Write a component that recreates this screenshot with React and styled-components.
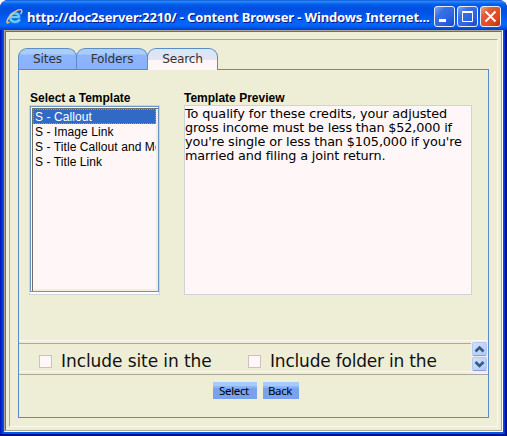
import React from "react";
import styled, { createGlobalStyle } from "styled-components";

const Global = createGlobalStyle`
  *{box-sizing:border-box}
  body{margin:0;background:#fff;overflow:hidden}
`;
const verdana = `"DejaVu Sans", Verdana, sans-serif`;
const arial = `"Liberation Sans", Arial, sans-serif`;

const Text = styled.span`
  white-space: pre;
  letter-spacing: ${(p) => p.$track || 0}px;
`;
const Win = styled.div`
  width: 507px; height: 436px;
  display: flex; flex-direction: column;
  border-radius: 8px 8px 0 0;
  background: linear-gradient(90deg,#0010b8 0,#0831d9 2px,#0455ea 4px,#0455ea 503px,#0030d0 505px,#00108c 505px);
  box-shadow: inset 0 -2px 0 #00108c;
  overflow: hidden;
`;
const TitleBar = styled.header`
  height: 30px; flex: none;
  display: flex; align-items: center;
  padding: 3px 6px 0 6px;
  background: linear-gradient(180deg,#0a3fc0 0,#2a8cff 1px,#2183fa 2px,#0660ec 4px,#0050e0 8px,#0054e6 14px,#0260fb 20px,#0468ff 25px,#0458ec 27px,#0040c8 30px);
`;
const Title = styled.h1`
  margin: 0 0 0 4px; flex: 1;
  font: 700 13px/18px "Noto Sans", sans-serif;
  color: #fff; text-shadow: 1px 1px 0 #0a1883;
`;
const Controls = styled.div`display:flex;gap:2px;flex:none;`;
const WinButton = styled.button`
  width: 21px; height: 21px; padding: 0;
  border: 1px solid #e6eefc; border-radius: 3px;
  background: ${(p) => p.$close
    ? "linear-gradient(135deg,#f0a088 0,#e25a38 30%,#dc4a22 70%,#b83010 100%)"
    : "linear-gradient(135deg,#7ba4f4 0,#3a70e6 30%,#2a60e0 70%,#1c48c0 100%)"};
  svg{display:block}
`;
const Outer = styled.div`
  margin: 0 4px 4px; flex: 1;
  display: flex;
  border: 1px solid; border-color: #aca899 #fff #fff #aca899;
`;
const Bevel = styled.div`
  flex: 1; display: flex; padding: 7px 3px 3px;
  background: #eeeed6;
  border: 1px solid; border-color: #716f64 #aca899 #aca899 #716f64;
`;
const Frame = styled.main`
  flex: 1; padding: 8px;
  border: 1px solid; border-color: #aca899 #fff6f2 #fff6f2 #aca899;
`;
const Tabs = styled.nav`display:flex;height:21px;`;
const Tab = styled.div`
  width: ${(p) => p.$w}px; height: ${(p) => (p.$active ? 22 : 21)}px;
  margin-right: -1px; position: relative;
  border: 1px solid #5a8cc8; border-bottom: 0;
  border-radius: 9px 9px 0 0;
  font: 12.2px/20px ${verdana}; color: #333;
  text-align: center;
  background: ${(p) => p.$active
    ? "linear-gradient(#d8e6f8 0 7px,#e6e4f2 7px 11px,#fff6f8 11px)"
    : "linear-gradient(#a9ccf8 0 5px,#8db5fd 6px,#8ab2fc 100%)"};
`;
const Panel = styled.section`
  height: 349px; border: 1px solid #5a8cc8;
  display: flex; flex-direction: column;
`;
const Columns = styled.div`
  height: 270px; display: flex; gap: 24px; padding: 21px 0 0 10px;
`;
const Label = styled.h2`
  margin: 0 0 0 ${(p) => p.$inset || 0}px; height: 14px;
  font: 700 12px/14px ${arial}; color: #000;
`;
const ListOuter = styled.div`
  width: 131px; height: 190px;
  border: 1px solid #ccd4dc; background: #fff; padding: 0 0 2px;
`;
const List = styled.ul`
  list-style: none; margin: 0; height: 186px; padding: 2px 2px 0 1px;
  border: 1px solid #6b93c9; background: #fff6f7;
  box-shadow: inset 1px 1px 0 #fff, inset 2px 2px 0 #716f64, inset -2px -2px 0 #f0eedc;
`;
const Option = styled.li`
  height: 15px; overflow: hidden; margin-left: 1px; padding-left: 2px;
  font: 12px/17px ${arial};
  color: ${(p) => (p.$selected ? "#fff" : "#000")};
  background: ${(p) => (p.$selected ? "#316ac5" : "transparent")};
  outline: ${(p) => (p.$selected ? "1px dotted #d89030" : "none")};
  outline-offset: -1px;
`;
const Preview = styled.div`
  width: 288px; height: 190px; border: 1px solid #ccd4d8;
  background: #fff6f7; font: 12.8px/14px ${verdana}; color: #000;
  display: flex; flex-direction: column; padding-top: 1px;
`;
const Strip = styled.div`
  height: 35px; display: flex; flex: none;
  border-top: 1px solid #fff6f2; border-bottom: 1px solid #aca899;
`;
const Checks = styled.div`
  flex: 1; display: flex; align-items: center; padding: 7px 0 0 20px;
  margin: 2px 0; border-top: 1px solid #aca899; border-bottom: 1px solid #fff6f2;
  font: 17px/20px ${verdana}; color: #111;
`;
const Check = styled.label`
  display:flex;align-items:center;gap:9px; width:209px;
`;
const Box = styled.span`width:13px;height:13px;border:1px solid #cfc0bc;background:#fff6f7;`;
const Scroll = styled.div`width:17px;display:flex;flex-direction:column;background:#f4eef0;padding-top:1px;`;
const ScrollButton = styled.button`
  height: 14px; width: 15px; margin: 0 1px 1px; padding: 0;
  border: 1px solid #b4c8f0; border-bottom-color: #8c9cd0; border-radius: 2px;
  background: linear-gradient(135deg,#d0e2ff,#a8ccf8);
  svg{display:block}
`;
const Actions = styled.div`display:flex;gap:6px;justify-content:center;padding:7px 0 0 5px;`;
const Action = styled.button`
  width: ${(p) => p.$w}px; height: 17px; padding: 0 2px 0 0; border: 0;
  background: linear-gradient(#a6ccfc 0 4px,#8fb4f6 4px 6px,#78a2ee 6px);
  font: 11.5px/17px "Noto Sans", Tahoma, sans-serif; color: #000;
`;

const IconSlot = styled.span`flex:none;display:block;width:17px;height:17px;svg{display:block}`;

function BrowserIcon() {
  return (
    <svg width="17" height="17" viewBox="0 0 17 17" fill="none">
      <path d="M13.8 11.4C12.3 15.2 4.4 15.8 4.2 9.6C4 4 13.2 3.4 13.1 9.2H5" stroke="#1c7fe0" strokeWidth="3.6" />
      <path d="M13.5 11.2C12 14.6 4.5 15.2 4.3 9.6C4.1 4.4 13 3.8 12.9 9H5" stroke="#6fcbfa" strokeWidth="2.2" />
      <path d="M3.4 14C-.6 17.2.4 11.5 5 6.8C9.4 2.2 15.4.2 15.9 2.8C16 3.9 15.4 5 14.6 6.2" stroke="#f0c878" strokeWidth="1.4" />
    </svg>
  );
}

const previewLines = [
  { text: "To qualify for these credits, your adjusted", track: -0.08 },
  { text: "gross income must be less than $52,000 if", track: -0.14 },
  { text: "you're single or less than $105,000 if you're", track: -0.12 },
  { text: "married and filing a joint return.", track: -0.14 },
];

export default function App() {
  return (
    <>
      <Global />
      <Win>
        <TitleBar>
          <IconSlot><BrowserIcon /></IconSlot>
          <Title><Text $track={-0.14}>http://doc2server:2210/ - Content Browser - Windows Internet...</Text></Title>
          <Controls>
            <WinButton aria-label="Minimize"><svg width="19" height="19"><path d="M4 12h7v3H4z" fill="#fff" /></svg></WinButton>
            <WinButton aria-label="Maximize"><svg width="19" height="19"><path d="M4.5 5.5h10v9h-10zM4 4.5h11" fill="none" stroke="#fff" /></svg></WinButton>
            <WinButton $close aria-label="Close"><svg width="19" height="19"><path d="M4.5 4.5l10 10M14.5 4.5l-10 10" stroke="#fff" strokeWidth="2" /></svg></WinButton>
          </Controls>
        </TitleBar>
        <Outer><Bevel><Frame>
          <Tabs>
            <Tab $w={59}><Text $track={-0.1}>Sites</Text></Tab>
            <Tab $w={72}><Text $track={-0.2}>Folders</Text></Tab>
            <Tab $w={71} $active><Text $track={-0.2}>Search</Text></Tab>
          </Tabs>
          <Panel>
            <Columns>
              <div>
                <Label $inset={1}><Text>Select a Template</Text></Label>
                <ListOuter><List>
                  <Option $selected><Text $track={0.08}>S - Callout</Text></Option>
                  <Option><Text $track={0.08}>S - Image Link</Text></Option>
                  <Option><Text $track={0.08}>S - Title Callout and Media</Text></Option>
                  <Option><Text $track={0.08}>S - Title Link</Text></Option>
                </List></ListOuter>
              </div>
              <div>
                <Label><Text>Template Preview</Text></Label>
                <Preview>
                  {previewLines.map((l) => <Text key={l.text} $track={l.track}>{l.text}</Text>)}
                </Preview>
              </div>
            </Columns>
            <Strip>
              <Checks>
                <Check><Box /><Text $track={-0.08}>Include site in the</Text></Check>
                <Check><Box /><Text $track={-0.2}>Include folder in the</Text></Check>
              </Checks>
              <Scroll>
                <ScrollButton aria-label="Up"><svg width="13" height="12"><path d="M2.5 8.5l4-4 4 4" fill="none" stroke="#3c5680" strokeWidth="2.6" /></svg></ScrollButton>
                <ScrollButton aria-label="Down"><svg width="13" height="12"><path d="M2.5 4l4 4 4-4" fill="none" stroke="#3c5680" strokeWidth="2.6" /></svg></ScrollButton>
              </Scroll>
            </Strip>
            <Actions>
              <Action $w={44}><Text $track={-0.35}>Select</Text></Action>
              <Action $w={36}><Text $track={-0.35}>Back</Text></Action>
            </Actions>
          </Panel>
        </Frame></Bevel></Outer>
      </Win>
    </>
  );
}
